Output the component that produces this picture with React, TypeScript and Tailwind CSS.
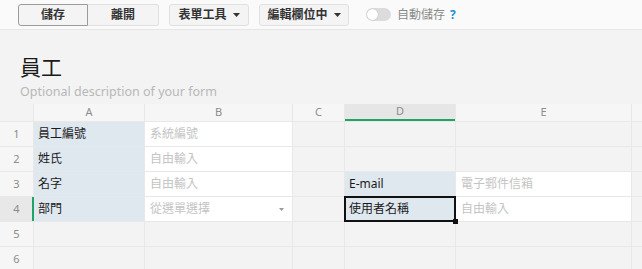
import React from 'react';

const font = { fontFamily: '"Noto Sans", "Noto Sans CJK TC", sans-serif' };

const Caret = () => (
  <svg width="7" height="4" viewBox="0 0 7 4" className="ml-1.5 inline-block">
    <path d="M0 0h7L3.5 4z" fill="#333" />
  </svg>
);

type Cell = { text?: string; kind: 'label' | 'input' | 'empty'; select?: boolean; active?: boolean; marker?: boolean };

const columns = ['A', 'B', 'C', 'D', 'E', ''];

const rows: Cell[][] = [
  [{ text: '員工編號', kind: 'label' }, { text: '系統編號', kind: 'input' }, { kind: 'empty' }, { kind: 'empty' }, { kind: 'empty' }, { kind: 'empty' }],
  [{ text: '姓氏', kind: 'label' }, { text: '自由輸入', kind: 'input' }, { kind: 'empty' }, { kind: 'empty' }, { kind: 'empty' }, { kind: 'empty' }],
  [{ text: '名字', kind: 'label' }, { text: '自由輸入', kind: 'input' }, { kind: 'empty' }, { text: 'E-mail', kind: 'label' }, { text: '電子郵件信箱', kind: 'input' }, { kind: 'empty' }],
  [{ text: '部門', kind: 'label', marker: true }, { text: '從選單選擇', kind: 'input', select: true }, { kind: 'empty' }, { text: '使用者名稱', kind: 'label', active: true }, { text: '自由輸入', kind: 'input' }, { kind: 'empty' }],
  [{ kind: 'empty' }, { kind: 'empty' }, { kind: 'empty' }, { kind: 'empty' }, { kind: 'empty' }, { kind: 'empty' }],
  [{ kind: 'empty' }, { kind: 'empty' }, { kind: 'empty' }, { kind: 'empty' }, { kind: 'empty' }, { kind: 'empty' }],
];

const GridCell: React.FC<{ cell: Cell }> = ({ cell }) => {
  if (cell.kind === 'empty') return <div className="bg-[#f3f3f3]" />;
  if (cell.kind === 'label') {
    return (
      <div className={`relative flex items-center bg-[#dfe7ef] pl-[4px] text-[12px] text-[#1a1a1a] ${cell.active ? 'outline-2 outline-[#111] -outline-offset-1' : ''}`}>
        {cell.marker && <span className="absolute left-[-2px] top-0 h-full w-[2px] bg-[#21a366]" />}
        {cell.text}
        {cell.active && <span className="absolute -right-[3px] -bottom-[3px] h-[5px] w-[5px] bg-[#111]" />}
      </div>
    );
  }
  return (
    <div className="flex items-center justify-between bg-white pl-[5px] pr-[8px] text-[12px] text-[#c4c4c4]">
      <span>{cell.text}</span>
      {cell.select && (
        <svg width="5" height="3" viewBox="0 0 5 3"><path d="M0 0h5L2.5 3z" fill="#999" /></svg>
      )}
    </div>
  );
};

export default function App() {
  return (
    <div className="h-[269px] w-[642px] overflow-hidden bg-[#f3f3f3]" style={font}>
      <div className="flex h-[30px] items-center border-b border-[#e6e6e6] bg-[#fafafa] pl-[18px]">
        <div className="flex">
          <button className="h-[22px] w-[70px] rounded-l-[3px] border border-[#9c9c9c] bg-[#f4f4f4] text-[12px] font-semibold text-[#333]">儲存</button>
          <button className="h-[22px] w-[71px] rounded-r-[3px] border border-l-0 border-[#e0e0e0] bg-[#f4f4f4] text-[12px] font-semibold text-[#333]">離開</button>
        </div>
        <button className="ml-[10px] flex h-[22px] w-[80px] items-center justify-center rounded-[3px] border border-[#e0e0e0] bg-[#f4f4f4] text-[12px] font-semibold text-[#333]">
          表單工具<Caret />
        </button>
        <button className="ml-[10px] flex h-[22px] w-[90px] items-center justify-center rounded-[3px] border border-[#e0e0e0] bg-[#f4f4f4] text-[12px] font-semibold text-[#333]">
          編輯欄位中<Caret />
        </button>
        <div className="ml-[17px] flex items-center">
          <div className="relative h-[13px] w-[25px] rounded-full bg-[#dcdcdc]">
            <span className="absolute left-[1px] top-[1px] h-[11px] w-[11px] rounded-full bg-white shadow-[0_0_1px_rgba(0,0,0,0.3)]" />
          </div>
          <span className="ml-[6px] text-[12px] text-[#8a8a8a]">自動儲存</span>
          <span className="ml-[5px] text-[12px] font-bold text-[#1a8fd8]">?</span>
        </div>
      </div>

      <div className="px-[18px] pt-[22px]">
        <div className="h-[30px] pl-[2px] text-[21px] leading-[30px] text-[#1a1a1a]">員工</div>
        <div className="mt-[2px] pl-[2px] text-[12.5px] leading-[16px] text-[#b8b8b8]">Optional description of your form</div>
      </div>

      <div className="mt-[4px] grid grid-cols-[33px_110px_147px_51px_110px_175px_1fr] grid-rows-[17px_24px_24px_24px_24px_24px_24px] gap-px bg-[#e8e8e8]">
        <div className="bg-[#f3f3f3]" />
        {columns.map((c, i) => (
          <div
            key={i}
            className={`flex items-center justify-center text-[11px] text-[#8c8c8c] ${c === 'D' ? 'border-b-2 border-[#21a366] bg-[#e6e6e6]' : 'bg-[#f6f6f6]'}`}
          >
            {c}
          </div>
        ))}
        {rows.map((r, ri) => (
          <React.Fragment key={ri}>
            <div className={`flex items-center justify-center text-[11px] text-[#8c8c8c] ${ri === 3 ? 'bg-[#e8e8e8]' : 'bg-[#f6f6f6]'}`}>{ri + 1}</div>
            {r.map((cell, ci) => (
              <GridCell key={ci} cell={cell} />
            ))}
          </React.Fragment>
        ))}
      </div>
    </div>
  );
}
